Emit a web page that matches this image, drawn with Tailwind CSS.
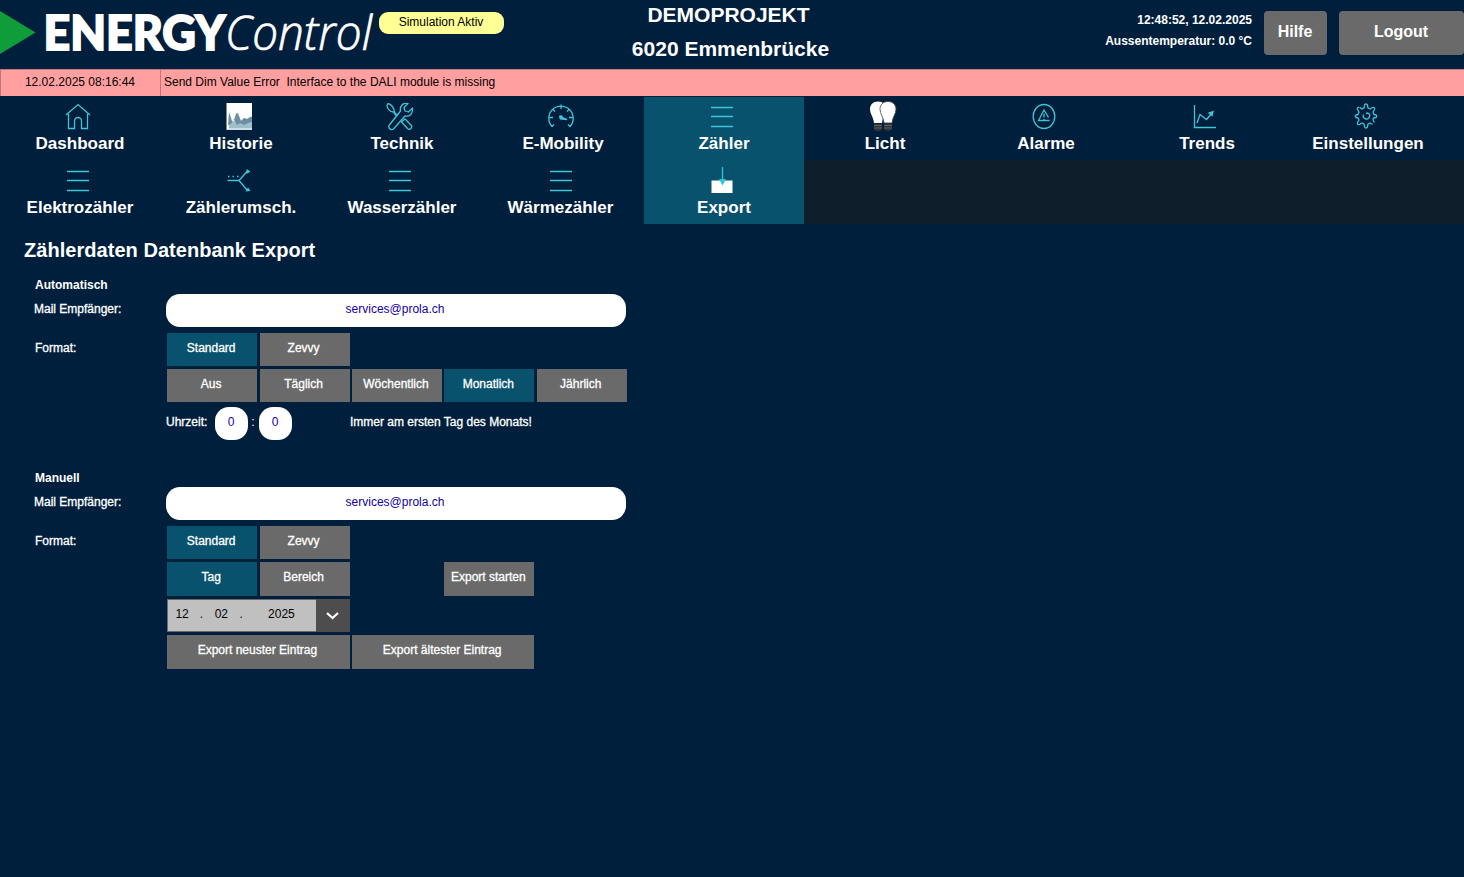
<!DOCTYPE html>
<html lang="de">
<head>
  <meta charset="UTF-8">
  <title>ENERGYControl | Zählerdaten Export</title>
  <meta name="viewport" content="width=device-width, initial-scale=1.0">
  <script src="https://cdn.jsdelivr.net/npm/@tailwindcss/browser@4"></script>
</head>
<body class="bg-[#001f3d] text-white text-[12px] leading-[14px] font-['Liberation_Sans',Arial,sans-serif] h-screen overflow-hidden">
  <svg class="hidden">
    <symbol id="menu" viewBox="0 0 28 28">
      <path d="M3 4.500h22M3 13.500h22M3 23.500h22" fill="none" stroke="#3fc4d8" stroke-width="1.400"/>
    </symbol>
  </svg>

  <header class="h-[69px] flex">
    <svg class="w-[376px] h-[69px] shrink-0 overflow-visible" viewBox="0 0 376 69">
      <path d="M0 11L35.500 32.500L0 54z" fill="#0e9d3a"/>
      <text x="43.500" y="49.500" textLength="182" lengthAdjust="spacingAndGlyphs" font-family="Lato" font-size="47" font-weight="900" fill="#fff" stroke="#fff" stroke-width="1.800">ENERGY</text>
      <text x="225" y="50" textLength="147" lengthAdjust="spacingAndGlyphs" font-family="Open Sans" font-size="48" font-weight="300" font-style="italic" fill="#fff" stroke="#fff" stroke-width=".7">Control</text>
    </svg>
    <div class="ml-[3px] mt-3 w-[125px] h-[22px] pt-[3px] pr-px rounded-[9px] bg-[#ffff96] text-black text-center">Simulation Aktiv</div>
    <div class="ml-[76px] w-[301px] text-center font-bold text-[21px] leading-[34px] -mt-[2px]">
      <p class="-ml-[4px]">DEMOPROJEKT</p>
      <p>6020 Emmenbrücke</p>
    </div>
    <div class="ml-auto mr-3 text-right font-bold leading-[21px] pt-[10px]">
      <p>12:48:52, 12.02.2025</p>
      <p>Aussentemperatur: 0.0 °C</p>
    </div>
    <button class="mt-[11px] w-[63px] h-[44px] pb-[3px] pr-px rounded-[4px] bg-[#6a6a6a] font-bold text-[16px]">Hilfe</button>
    <button class="mt-[11px] ml-3 w-[125px] h-[44px] pb-[3px] pr-px rounded-[4px] bg-[#6a6a6a] font-bold text-[16px]">Logout</button>
  </header>

  <div class="h-[27px] flex bg-[#ff9f9f] text-black border-t border-[#b87a80]">
    <div class="w-[161px] pt-[5px] pr-px border-x border-[#b87a80] text-center">12.02.2025 08:16:44</div>
    <div class="pl-[3px] pt-[5px] whitespace-pre">Send Dim Value Error  Interface to the DALI module is missing</div>
  </div>

  <!-- Hauptmenü -->
  <nav class="mt-px text-[17px] leading-[20px] font-bold">
    <div class="flex gap-px h-[63px]">
      <a class="w-[160px] shrink-0 flex flex-col items-center pt-[6px]">
        <svg class="w-7 h-7 -ml-1" viewBox="0 0 28 28" fill="none" stroke="#3fc4d8" stroke-width="1.300"><path d="M2 12L14 1.500L26 12M4.500 11V25.500H10.500V18a3.500 3.500 0 0 1 7 0V25.500H23.500V11"/></svg>
        <span class="mt-[3px]">Dashboard</span>
      </a>
      <a class="w-[160px] shrink-0 flex flex-col items-center pt-[6px]">
        <svg class="w-7 h-7 -ml-1" viewBox="0 0 28 28"><path d="M1.500-.5h25.500v27.500h-25.500z" fill="#fff"/><path d="M4 11l3 8 2-1 2-7 2-1 3 8 3-3 3 1 5-3v12.500H4z" fill="#9dc0cb"/><path d="M4 9l3 9 2-1 2-6 1-1 1 1 3 7 3-3 3 1 3-2h2v5l-4 1-4 2-4-2-3 2-3-6-3 5-3 1z" fill="#6f8fa0"/><path d="M2 26.500h25" stroke="#cfd9de"/></svg>
        <span class="mt-[3px]">Historie</span>
      </a>
      <a class="w-[160px] shrink-0 flex flex-col items-center pt-[6px]">
        <svg class="w-7 h-7 -ml-1" viewBox="0 0 28 28" fill="none" stroke="#3fc4d8" stroke-width="1.300" stroke-linejoin="round"><path d="M3 22.500a3 3 0 0 0 4.500 3.500l11.500-13c5 1 8-2.500 7.500-8l-4 4-3.500-1-1-3.500 4-4c-5-1-8.500 2.500-7.500 7.500L3 22.500z"/><path d="M11 12L8.500 9.500C8.500 5 5 1 2 .5L1 2.500c0 3 3 6.500 6.500 6.500L10.500 13M17 17.500l2-1.500 6 6c2 2.500-1 5.500-3.500 3.500l-6-6.500z"/></svg>
        <span class="mt-[3px]">Technik</span>
      </a>
      <a class="w-[160px] shrink-0 flex flex-col items-center pt-[6px]">
        <svg class="w-7 h-7 -ml-1" viewBox="0 0 28 28" fill="none" stroke="#3fc4d8" stroke-width="1.300"><path d="M5 23.500A12.200 12.200 0 1 1 23 23.500L21 21.500M5 23.500L7 21.500M14 1.500v4.500M2 14.500h4M22 14.500h4M5.500 6l2.500 2.500M22.500 6L20 8.500"/><path d="M13 13.500l7 3-6.500-.5z" fill="#3fc4d8"/><circle cx="14" cy="14" r="1.200" fill="#3fc4d8"/></svg>
        <span class="mt-[3px]">E-Mobility</span>
      </a>
      <a class="w-[160px] shrink-0 flex flex-col items-center pt-[6px] bg-[#08526e]">
        <svg class="w-7 h-7 -ml-1"><use href="#menu"/></svg>
        <span class="mt-[3px]">Zähler</span>
      </a>
      <a class="w-[160px] shrink-0 flex flex-col items-center pt-[4px]">
        <svg class="w-[28px] h-[32px] -ml-1" viewBox="0 0 28 32"><path d="M9 .5c-5 0-8 3.500-8 7.500 0 5 3.500 8 4 14h8c.5-6 4-9 4-14C17 4 14 .5 9 .5z" fill="#fff"/><path d="M5 22.500h8v6l-2 1.500H7l-2-1.500z" fill="#2c3238"/><path d="M5 24.500h8M5 27h8" stroke="#6c7074" stroke-width=".8"/><path d="M19 .5c-5 0-8 3.500-8 7.500 0 5 3.500 8 4 14h8c.5-6 4-9 4-14C27 4 24 .5 19 .5z" fill="#fff" stroke="#3c4348" stroke-width=".8"/><path d="M15 22.500h8v6l-2 1.500h-4l-2-1.500z" fill="#2c3238"/><path d="M15 24.500h8M15 27h8" stroke="#6c7074" stroke-width=".8"/></svg>
        <span class="mt-px">Licht</span>
      </a>
      <a class="w-[160px] shrink-0 flex flex-col items-center pt-[6px]">
        <svg class="w-7 h-7 -ml-1" viewBox="0 0 28 28" fill="none" stroke="#3fc4d8" stroke-width="1.300"><ellipse cx="14" cy="13.500" rx="10.800" ry="12"/><path d="M19.500 17.500H8.500L14 7l4.500 7.500M14 10.500v4M14 16v1.200"/></svg>
        <span class="mt-[3px]">Alarme</span>
      </a>
      <a class="w-[160px] shrink-0 flex flex-col items-center pt-[6px]">
        <svg class="w-7 h-7 -ml-1" viewBox="0 0 28 28" fill="none" stroke="#3fc4d8" stroke-width="1.300"><path d="M3.500 2v22.500H25M6 20l3-8.500 6.500 5L21 10"/><path d="M22 8.500l-4 1.500 3 2.500z" fill="#3fc4d8"/></svg>
        <span class="mt-[3px]">Trends</span>
      </a>
      <a class="w-[160px] shrink-0 flex flex-col items-center pt-[5px]">
        <svg class="w-7 h-7 -ml-1" viewBox="0 0 28 28" fill="none" stroke="#3fc4d8" stroke-width="1.300" stroke-linejoin="round"><path d="M12.500 3.500a1.500 1.500 0 0 1 3 0l.5 2.500 2 1 2.500-1.500c1.500-.5 2.500.5 2 2L21 10l1 2.500 2 .5a1.500 1.500 0 0 1 0 2.500l-2.500.5-.5 2 1.500 2.500M20.500 22.500L18 21l-2 1-.5 2.500a1.500 1.500 0 0 1-3 0L12 22l-2-1-2.500 1.500c-1.500.5-2.500-.5-2-2L7 18l-1-2-2-.5A1.500 1.500 0 0 1 4 13l2-.5L7 10 5.500 7.500c-.5-1.500.5-2.500 2-2"/><path d="M11.500 12.500a3.200 3.200 0 1 0 4.500-1.500L14 11.500M8 5.500L10 7l2-1 .5-2.500"/></svg>
        <span class="mt-[4px]">Einstellungen</span>
      </a>
    </div>
    <div class="flex gap-px h-[64px]">
      <a class="w-[160px] shrink-0 flex flex-col items-center pt-[7px]">
        <svg class="w-7 h-7 -ml-1"><use href="#menu"/></svg>
        <span class="mt-[3px]">Elektrozähler</span>
      </a>
      <a class="w-[160px] shrink-0 flex flex-col items-center pt-[7px]">
        <svg class="w-7 h-7 -ml-1" viewBox="0 0 28 28" fill="none" stroke="#3fc4d8" stroke-width="1.300"><path d="M2.500 13.500H14L22 4.500M14 13.500l8 9.500"/><path d="M3 9.500h1.500M7.500 9.500H9M12 9.500h1.500"/><path d="M25.500 4.500L21.500 2v5zM25.500 24l-5 .5 2.500-4z" fill="#3fc4d8" stroke="none"/></svg>
        <span class="mt-[3px]">Zählerumsch.</span>
      </a>
      <a class="w-[160px] shrink-0 flex flex-col items-center pt-[7px]">
        <svg class="w-7 h-7 -ml-1"><use href="#menu"/></svg>
        <span class="mt-[3px]">Wasserzähler</span>
      </a>
      <a class="w-[160px] shrink-0 flex flex-col items-center pt-[7px]">
        <svg class="w-7 h-7 -ml-1"><use href="#menu"/></svg>
        <span class="mt-[3px] pr-[5px]">Wärmezähler</span>
      </a>
      <a class="w-[160px] shrink-0 flex flex-col items-center pt-[7px] bg-[#08526e]">
        <svg class="w-7 h-7 -ml-1" viewBox="0 0 28 28"><path d="M3.500 13.500h21v12.500h-21z" fill="#fff"/><path d="M14.500 0v14" stroke="#2bc8d8" stroke-width="1.300"/><path d="M11 12h7l-3.500 6.500z" fill="#2bc8d8"/></svg>
        <span class="mt-[3px]">Export</span>
      </a>
      <div class="grow -ml-px bg-[#0f1e2b]"></div>
    </div>
  </nav>

  <main>
    <h1 class="pl-6 pt-[14px] text-[20px] leading-[24px] tracking-[0.04px] font-bold">Zählerdaten Datenbank Export</h1>

    <!-- Automatisch -->
    <section class="pl-[34px] mt-4">
      <h2 class="pl-px font-bold">Automatisch</h2>
      <div class="flex mt-[2px]">
        <label class="w-[132px] pt-[8px] [-webkit-text-stroke:0.3px]">Mail Empfänger:</label>
        <div class="w-[460px] h-[33px] pt-[8px] pr-[2px] rounded-[14px] bg-white text-[#1400a8] text-center">services@prola.ch</div>
      </div>
      <div class="flex mt-[6px] [-webkit-text-stroke:0.3px]">
        <label class="w-[133.2px] pl-px pt-[8px]">Format:</label>
        <div class="grid grid-cols-[90px_90px_90px_90px_90px] gap-x-[2.4px] gap-y-[3px]">
          <button class="h-[33px] pb-[3px] pr-[2px] bg-[#08526e]">Standard</button>
          <button class="h-[33px] pb-[3px] pr-[2px] bg-[#6a6a6a]">Zevvy</button>
          <button class="col-start-1 h-[33px] pb-[3px] pr-[2px] bg-[#6a6a6a]">Aus</button>
          <button class="h-[33px] pb-[3px] pr-[2px] bg-[#6a6a6a]">Täglich</button>
          <button class="h-[33px] pb-[3px] pr-[2px] bg-[#6a6a6a]">Wöchentlich</button>
          <button class="h-[33px] pb-[3px] pr-[2px] bg-[#08526e]">Monatlich</button>
          <button class="h-[33px] pb-[3px] pr-[2px] bg-[#6a6a6a]">Jährlich</button>
        </div>
      </div>
      <div class="flex mt-[5px] pl-[132px]">
        <span class="w-[49px] pt-[8px] [-webkit-text-stroke:0.3px]">Uhrzeit:</span>
        <div class="w-[33px] h-[33px] pt-[8px] pr-px rounded-[14px] bg-white text-[#1400c0] text-center">0</div>
        <span class="w-[11px] pt-[8px] pr-px text-center">:</span>
        <div class="w-[33px] h-[33px] pt-[8px] pr-px rounded-[14px] bg-white text-[#1400c0] text-center">0</div>
        <span class="ml-[58px] pt-[8px] [-webkit-text-stroke:0.3px]">Immer am ersten Tag des Monats!</span>
      </div>
    </section>

    <!-- Manuell -->
    <section class="pl-[34px] mt-[31px]">
      <h2 class="pl-px font-bold">Manuell</h2>
      <div class="flex mt-[2px]">
        <label class="w-[132px] pt-[8px] [-webkit-text-stroke:0.3px]">Mail Empfänger:</label>
        <div class="w-[460px] h-[33px] pt-[8px] pr-[2px] rounded-[14px] bg-white text-[#1400a8] text-center">services@prola.ch</div>
      </div>
      <div class="flex mt-[6px]">
        <label class="w-[133.2px] pl-px pt-[8px] [-webkit-text-stroke:0.3px]">Format:</label>
        <div class="grid grid-cols-[90px_90px_90px_90px] gap-x-[2.4px] gap-y-[3px]">
          <button class="h-[33px] pb-[3px] pr-[2px] bg-[#08526e] [-webkit-text-stroke:0.3px]">Standard</button>
          <button class="h-[33px] pb-[3px] pr-[2px] bg-[#6a6a6a] [-webkit-text-stroke:0.3px]">Zevvy</button>
          <button class="col-start-1 h-[34px] pb-[4px] pr-[2px] bg-[#08526e] [-webkit-text-stroke:0.3px]">Tag</button>
          <button class="h-[34px] pb-[4px] pr-[2px] bg-[#6a6a6a] [-webkit-text-stroke:0.3px]">Bereich</button>
          <button class="col-start-4 h-[34px] pb-[4px] pr-[2px] bg-[#6a6a6a] whitespace-nowrap [-webkit-text-stroke:0.3px]">Export starten</button>
          <div class="col-start-1 col-span-2 h-[33px] flex bg-[#4d4d4d]">
            <div class="w-[149px] border-y border-l border-[#6a6a6a] bg-[#c0c0c0] text-black flex pt-[7px]">
              <span class="w-[28px] text-center">12</span>
              <span class="w-[11px] text-center">.</span>
              <span class="w-[29px] text-center">02</span>
              <span class="w-[11px] text-center">.</span>
              <span class="w-[70px] text-center">2025</span>
            </div>
            <svg class="w-[33px] h-[33px]" viewBox="0 0 33 33"><path d="M11 14l5.500 5L22 14" fill="none" stroke="#fff" stroke-width="2.200"/></svg>
          </div>
          <button class="col-start-1 col-span-2 h-[34px] pb-[4px] pr-[2px] bg-[#6a6a6a] [-webkit-text-stroke:0.3px]">Export neuster Eintrag</button>
          <button class="col-span-2 h-[34px] pb-[4px] pr-[2px] bg-[#6a6a6a] [-webkit-text-stroke:0.3px]">Export ältester Eintrag</button>
        </div>
      </div>
    </section>
  </main>
</body>
</html>
